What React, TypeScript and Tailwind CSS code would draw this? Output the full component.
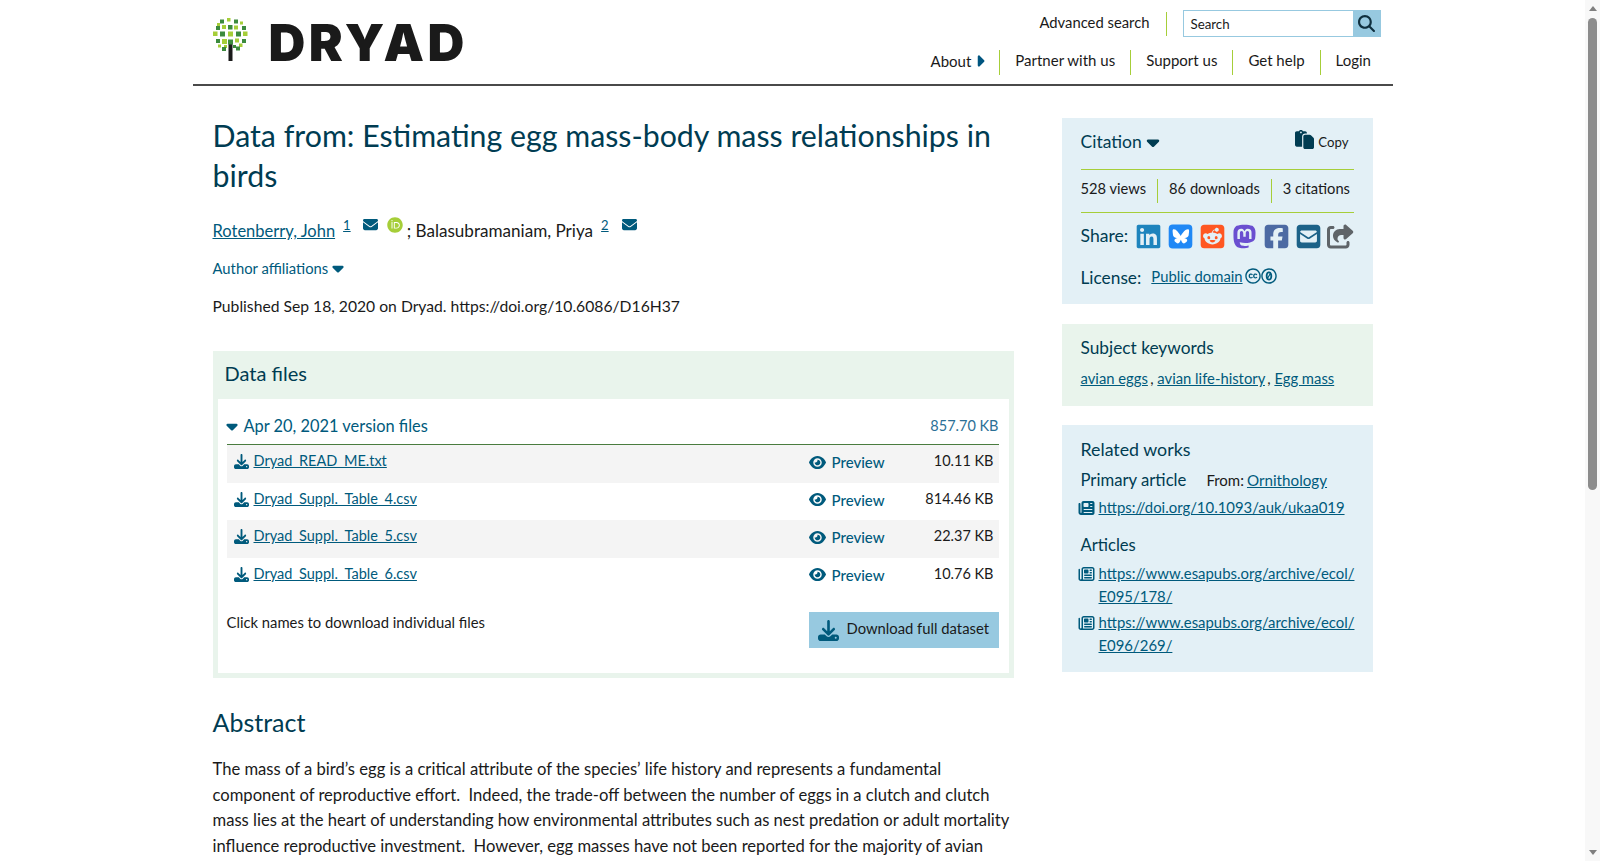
import {
  FaCaretDown,
  FaCaretRight,
  FaCreativeCommons,
  FaCreativeCommonsZero,
  FaDownload,
  FaEnvelope,
  FaEye,
  FaLinkedin,
  FaMagnifyingGlass,
  FaMastodon,
  FaNewspaper,
  FaOrcid,
  FaPaste,
  FaRegNewspaper,
  FaShareFromSquare,
  FaSquareEnvelope,
  FaSquareFacebook,
  FaSquareReddit,
} from "react-icons/fa6";

const files = [
  { name: "Dryad_READ_ME.txt", size: "10.11 KB" },
  { name: "Dryad_Suppl._Table_4.csv", size: "814.46 KB" },
  { name: "Dryad_Suppl._Table_5.csv", size: "22.37 KB" },
  { name: "Dryad_Suppl._Table_6.csv", size: "10.76 KB" },
];

// tree crown squares: x, y, size, colour
const leaves: [number, number, number, string][] = [
  [14, 0, 3.5, "#a6ce39"],
  [7, 1.5, 4, "#3c8a3e"],
  [21, 1.5, 4, "#3c8a3e"],
  [27, 3.5, 3, "#a6ce39"],
  [4, 5, 3, "#a6ce39"],
  [9, 7, 4, "#a6ce39"],
  [15, 7, 4.5, "#3c8a3e"],
  [21, 7.5, 4, "#a6ce39"],
  [3, 8, 4, "#3c8a3e"],
  [29, 8, 4, "#3c8a3e"],
  [0, 13.5, 4.5, "#a6ce39"],
  [7, 13.5, 5, "#3c8a3e"],
  [15, 13.5, 5, "#a6ce39"],
  [23, 13.5, 5, "#3c8a3e"],
  [30, 13.5, 4.5, "#a6ce39"],
  [3, 21, 4, "#3c8a3e"],
  [9, 21, 5, "#a6ce39"],
  [15, 21.5, 5, "#3c8a3e"],
  [22, 20.5, 4, "#a6ce39"],
  [29, 21, 4, "#3c8a3e"],
  [5, 26.5, 3, "#a6ce39"],
  [11, 27, 3, "#a6ce39"],
  [20, 27, 3, "#3c8a3e"],
  [26, 25.5, 3.5, "#a6ce39"],
  [9, 29, 4, "#3c8a3e"],
  [23, 28.5, 4, "#3c8a3e"],
];

function TreeLogo() {
  return (
    <svg width="35" height="43" viewBox="0 0 35 43" className="mr-[21px] shrink-0">
      <rect x="15.5" y="26" width="4" height="17" fill="#1a1a1a" />
      {leaves.map(([x, y, s, c], i) => (
        <rect key={i} x={x} y={y} width={s} height={s} fill={c} />
      ))}
    </svg>
  );
}

function BlueskySquare() {
  return (
    <svg width="27" height="27" viewBox="-1.7 -1.5 27 27">
      <rect width="23.6" height="24" rx="4" fill="#2088f5" />
      <path
        d="M7.2 5.6c1.9 1.4 3.9 4.3 4.8 5.9.9-1.6 2.9-4.5 4.8-5.9 1.4-1 3.6-1.8 3.6.7 0 .5-.3 4.2-.5 4.8-.6 2.1-2.7 2.6-4.6 2.3 3.3.6 4.1 2.4 2.3 4.2-3.4 3.5-4.9-.9-5.3-2-.1-.2-.1-.3-.1-.2-.1-.1-.1 0-.2.2-.4 1.1-1.9 5.5-5.3 2-1.8-1.8-1-3.6 2.3-4.2-1.9.3-4-.2-4.6-2.3-.2-.6-.5-4.3-.5-4.8 0-2.5 2.2-1.7 3.6-.7z"
        fill="#fff"
      />
    </svg>
  );
}

function NavSep() {
  return <span className="mx-[15px] h-[25px] w-px bg-[#a6ce39]" />;
}

function Header() {
  return (
    <header className="flex h-[86px] justify-between border-b-2 border-[#4a4a4a] pl-5 pr-[12px]">
      <div className="flex items-start pt-[18px]">
        <TreeLogo />
        <span className="text-[51px] font-black leading-[50px] tracking-[3.5px] text-[#1a1a1a] font-['Inter',sans-serif]">
          DRYAD
        </span>
      </div>
      <div className="flex flex-col items-end">
        <div className="mt-[10px] flex h-[27px] items-center">
          <a className="mt-[-3px] text-[14.8px] leading-[24px] text-[#1a1a1a]">Advanced search</a>
          <span className="mx-[16px] h-[24px] w-px bg-[#a6ce39]" />
          <div className="flex h-[27px] w-[198px] border border-[#97c9e0]">
            <span className="flex-1 pl-[7px] text-[13.3px] leading-[26px] text-[#1a1a1a]">Search</span>
            <span className="flex w-[27px] items-center justify-center bg-[#97c9e0]">
              <FaMagnifyingGlass className="text-[17px] text-[#0f2f3e]" />
            </span>
          </div>
        </div>
        <nav className="mt-[13px] flex h-[25px] items-center pr-[9.5px] text-[15px] leading-[22px] text-[#1a1a1a]">
          <span className="mr-[-5px] mt-[-4px] flex items-center">
            About <FaCaretRight className="text-[18px] text-[#005580]" />
          </span>
          <NavSep />
          <span className="mt-[-6px]">Partner with us</span>
          <NavSep />
          <span className="mt-[-6px]">Support us</span>
          <NavSep />
          <span className="mt-[-6px]">Get help</span>
          <NavSep />
          <span className="mt-[-6px]">Login</span>
        </nav>
      </div>
    </header>
  );
}

function FileRow({ name, size, even }: { name: string; size: string; even: boolean }) {
  return (
    <div className={even ? "flex h-[37.5px] bg-[#f4f4f4]" : "flex h-[37.5px]"}>
      <div className="flex flex-1 items-start pl-[7px] pt-[5px]">
        <FaDownload className="mr-[5px] mt-[4px] text-[15px] text-[#005a7c]" />
        <a className="text-[14.5px] leading-[22px] text-[#005a7c] underline">{name}</a>
      </div>
      <div className="flex w-[114px] items-center pb-[3px] text-[15px] font-medium text-[#005a7c]">
        <FaEye className="mr-[6px] text-[17px]" />
        Preview
      </div>
      <div className="w-[76px] whitespace-nowrap pr-[5px] pt-[5px] text-right text-[14.5px] leading-[22px] text-[#1a1a1a]">{size}</div>
    </div>
  );
}

function DataFiles() {
  return (
    <section className="mt-[34px] bg-[#e9f4ec] px-[5px] pb-[5px]">
      <h2 className="pl-[7px] pt-[7px] text-[20px] leading-[30px] text-[#003c52]">Data files</h2>
      <div className="mt-[11px] bg-white pb-[25px] pl-[9px] pr-[10px] pt-[14px]">
        <div className="flex h-[32px] items-center justify-between border-b border-[#4a7c3f] pb-[5px]">
          <span className="mt-[1px] flex items-center text-[16.4px] text-[#005a7c]">
            <FaCaretDown className="ml-[-4px] mr-[3px] text-[18px]" />
            Apr 20, 2021 version files
          </span>
          <span className="text-[14.5px] text-[#2b7096]">857.70 KB</span>
        </div>
        {files.map((f, i) => (
          <FileRow key={f.name} name={f.name} size={f.size} even={i % 2 === 0} />
        ))}
        <div className="mt-[17px] flex justify-between">
          <p className="mt-[-1px] text-[14.8px] leading-[22px] text-[#1a1a1a]">Click names to download individual files</p>
          <button className="flex h-[36px] w-[190px] items-center whitespace-nowrap bg-[#97c9e0] pl-[9px] text-[14.8px] text-[#1a1a1a]">
            <FaDownload className="mr-[8px] text-[21px] text-[#005a7c]" />
            <span className="mb-[4px]">Download full dataset</span>
          </button>
        </div>
      </div>
    </section>
  );
}

function MainColumn() {
  return (
    <div className="w-[801px] shrink-0">
      <h1 className="text-[30.3px] leading-[40px] text-[#003c52]">
        Data from: Estimating egg mass-body mass relationships in birds
      </h1>
      <div className="mt-[19px] flex items-start text-[17.1px] text-[#1a1a1a]">
        <a className="mt-[5px] text-[16.5px] leading-[24px] text-[#005a7c] underline">Rotenberry, John</a>
        <span className="ml-[8px] mt-[2px] text-[13px] text-[#005a7c] underline">1</span>
        <FaEnvelope className="ml-[12px] mt-[3px] text-[15px] text-[#005a7c]" />
        <FaOrcid className="ml-[9px] mt-[3px] text-[16px] text-[#a6ce39]" />
        <span className="ml-[4px] mt-[5px] leading-[24px]">; Balasubramaniam, Priya</span>
        <span className="ml-[8px] mt-[2px] text-[13px] text-[#005a7c] underline">2</span>
        <FaEnvelope className="ml-[13px] mt-[3px] text-[15px] text-[#005a7c]" />
      </div>
      <div className="mt-[14px] flex items-center text-[14.8px] leading-[22px] text-[#005a7c]">
        Author affiliations <FaCaretDown className="ml-[1px] text-[18px]" />
      </div>
      <p className="mt-[16px] text-[15.7px] leading-[22px] text-[#1a1a1a]">
        Published Sep 18, 2020 on Dryad. https://doi.org/10.6086/D16H37
      </p>
      <DataFiles />
      <h2 className="mt-[28px] text-[25px] leading-[32px] text-[#003c52]">Abstract</h2>
      <p className="mt-[19px] whitespace-pre-wrap text-[16.6px] leading-[25.5px] text-[#1a1a1a]">
        {"The mass of a bird’s egg is a critical attribute of the species’ life history and represents a fundamental component of reproductive effort.  Indeed, the trade-off between the number of eggs in a clutch and clutch mass lies at the heart of understanding how environmental attributes such as nest predation or adult mortality influence reproductive investment.  However, egg masses have not been reported for the majority of avian species."}
      </p>
    </div>
  );
}

function Citation() {
  return (
    <section className="bg-[#e3f0f6] px-[19px] pb-[13px] pt-[11px]">
      <div className="flex h-[41px] items-start justify-between border-b border-[#a6ce39]">
        <span className="flex items-center text-[17.5px] leading-[26px] text-[#003c52]">
          Citation <FaCaretDown className="ml-[1px] text-[20px]" />
        </span>
        <span className="mr-[5px] flex items-center text-[13.2px] leading-[26px] text-[#1a1a1a]">
          <FaPaste className="mr-[4px] mt-[-6px] text-[19px] text-[#003c52]" />
          Copy
        </span>
      </div>
      <div className="flex h-[43px] items-center gap-[11px] border-b border-[#a6ce39] text-[14.7px] text-[#1a1a1a]">
        <span className="mt-[-6px]">528 views</span>
        <span className="h-[24px] w-px bg-[#a6ce39]" />
        <span className="mt-[-6px]">86 downloads</span>
        <span className="h-[24px] w-px bg-[#a6ce39]" />
        <span className="mt-[-6px]">3 citations</span>
      </div>
      <div className="mt-[6px] flex h-[34px] items-center text-[17.6px] text-[#003c52]">
        <span className="mr-[7px]">Share:</span>
        <div className="flex items-center gap-[5px] text-[27px]">
          <FaLinkedin className="text-[#1e84bd]" />
          <BlueskySquare />
          <FaSquareReddit className="text-[#ff5722]" />
          <FaMastodon className="text-[#6a4fd0]" />
          <FaSquareFacebook className="text-[#4c6aa3]" />
          <FaSquareEnvelope className="text-[#1c6288]" />
          <FaShareFromSquare className="text-[#5f6468]" />
        </div>
      </div>
      <div className="mt-[12px] flex items-center text-[#003c52]">
        <span className="mr-[10px] text-[17.3px]">License:</span>
        <a className="mt-[-3px] text-[14.8px] text-[#005a7c] underline">Public domain</a>
        <FaCreativeCommons className="ml-[2px] mt-[-3px] text-[16px] text-[#005a7c]" />
        <FaCreativeCommonsZero className="mt-[-3px] text-[16px] text-[#005a7c]" />
      </div>
    </section>
  );
}

function Keywords() {
  return (
    <section className="mt-[20px] h-[82px] bg-[#e9f4ec] px-[19px] pt-[11px]">
      <h3 className="text-[17.3px] leading-[26px] text-[#003c52]">Subject keywords</h3>
      <p className="mt-[6px] text-[14.8px] leading-[22px] text-[#1a1a1a]">
        <a className="text-[#005a7c] underline">avian eggs</a> <span className="ml-[-1.5px]">,</span>{" "}
        <a className="text-[#005a7c] underline">avian life-history</a> <span className="ml-[-1.5px]">,</span>{" "}
        <a className="text-[#005a7c] underline">Egg mass</a>
      </p>
    </section>
  );
}

function ArticleLink({ href, solid }: { href: string; solid?: boolean }) {
  return (
    <div className="flex items-start text-[14.9px] leading-[23px]">
      {solid ? (
        <FaNewspaper className="ml-[-3px] mr-[4px] mt-[4px] w-[17px] shrink-0 text-[16px] text-[#005a7c]" />
      ) : (
        <FaRegNewspaper className="ml-[-3px] mr-[4px] mt-[4px] w-[17px] shrink-0 text-[16px] text-[#005a7c]" />
      )}
      <a className="break-words text-[#005a7c] underline">{href}</a>
    </div>
  );
}

function Related() {
  return (
    <section className="mt-[19px] h-[247px] bg-[#e3f0f6] px-[19px] pt-[11px]">
      <h3 className="text-[17.8px] leading-[26px] text-[#003c52]">Related works</h3>
      <div className="mt-[5px] flex items-baseline">
        <span className="text-[16.7px] leading-[26px] text-[#003c52]">Primary article</span>
        <span className="ml-[20px] text-[15px] text-[#1a1a1a]">From:</span>
        <a className="ml-[3px] text-[15.2px] text-[#005a7c] underline">Ornithology</a>
      </div>
      <div className="mt-[3px]">
        <ArticleLink solid href="https://doi.org/10.1093/auk/ukaa019" />
      </div>
      <h4 className="mt-[13px] text-[16.6px] leading-[26px] text-[#003c52]">Articles</h4>
      <div className="mt-[4px] flex flex-col gap-[3px]">
        <ArticleLink href="https://www.esapubs.org/archive/ecol/ E095/178/" />
        <ArticleLink href="https://www.esapubs.org/archive/ecol/ E096/269/" />
      </div>
    </section>
  );
}

function Scrollbar() {
  return (
    <div className="flex w-[15px] shrink-0 flex-col items-center bg-[#f8f8f8]">
      <div className="mt-[6px] h-0 w-0 border-x-[4.5px] border-b-[5px] border-x-transparent border-b-[#7f7f7f]" />
      <div className="mt-[7px] h-[472px] w-[9px] rounded-[4.5px] bg-[#8c8c8c]" />
      <div className="mb-[6px] mt-auto h-0 w-0 border-x-[4.5px] border-t-[5px] border-x-transparent border-t-[#7f7f7f]" />
    </div>
  );
}

export default function App() {
  return (
    <div className="flex h-[861px] overflow-hidden bg-white font-['Lato',sans-serif]">
      <div className="min-w-0 flex-1">
        <div className="mx-auto w-[1200px]">
          <Header />
          <div className="flex pl-5 pr-5 pt-[29px]">
            <MainColumn />
            <aside className="ml-[48px] w-[311px] shrink-0 pt-[3px]">
              <Citation />
              <Keywords />
              <Related />
            </aside>
          </div>
        </div>
      </div>
      <Scrollbar />
    </div>
  );
}
